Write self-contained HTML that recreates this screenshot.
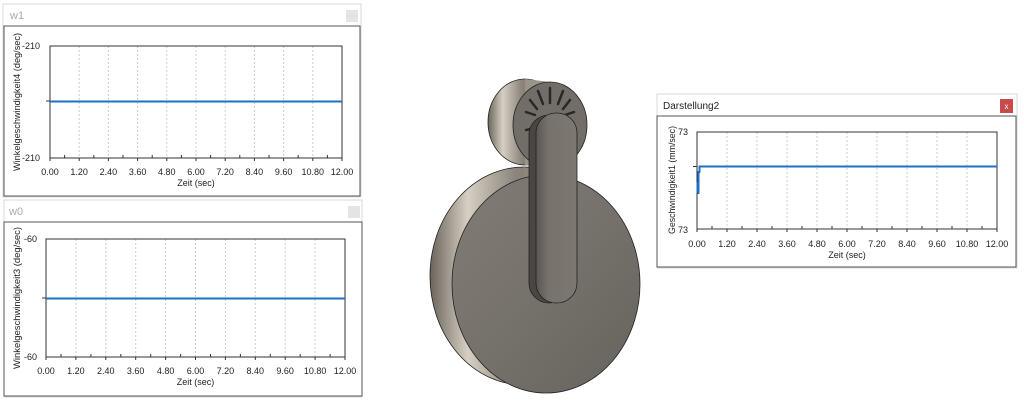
<!DOCTYPE html>
<html><head><meta charset="utf-8"><style>
html,body{margin:0;padding:0;background:#fff;width:1024px;height:410px;overflow:hidden}
svg{display:block}
text{font-family:"Liberation Sans",sans-serif;fill:#222}
</style></head><body>
<svg width="1024" height="410" viewBox="0 0 1024 410" xmlns="http://www.w3.org/2000/svg">
<defs>
<linearGradient id="rim" x1="0" y1="0" x2="1" y2="0">
<stop offset="0" stop-color="#6a645c"/><stop offset="0.2" stop-color="#d6cfc3"/><stop offset="0.45" stop-color="#8d867c"/><stop offset="1" stop-color="#55504a"/>
</linearGradient>
<linearGradient id="face" x1="0" y1="0" x2="1" y2="1">
<stop offset="0" stop-color="#817c75"/><stop offset="0.5" stop-color="#76716b"/><stop offset="1" stop-color="#66625c"/>
</linearGradient>
<linearGradient id="arm" x1="0" y1="0" x2="1" y2="0">
<stop offset="0" stop-color="#5a5650"/><stop offset="0.3" stop-color="#77726b"/><stop offset="1" stop-color="#7c7770"/>
</linearGradient>
</defs>

<!-- Window w1 -->
<rect x="3" y="4" width="358" height="193" fill="#fff" stroke="#d8d8d8"/>
<text x="10" y="19" font-size="11" style="fill:#aaa">w1</text>
<rect x="346" y="10" width="12" height="12" fill="#e4e4e4"/>
<rect x="4" y="26" width="356" height="170" fill="#fff" stroke="#555"/>
<g stroke="#ccc" stroke-dasharray="2,2">
<path d="M79.2 46V158M108.4 46V158M137.6 46V158M166.8 46V158M196 46V158M225.2 46V158M254.4 46V158M283.6 46V158M312.8 46V158"/>
</g>
<rect x="50" y="46" width="292" height="112" fill="none" stroke="#333"/>
<path d="M46 101H50M50 158V161M64.6 158V155M79.2 158V161M93.8 158V155M108.4 158V161M123 158V155M137.6 158V161M152.2 158V155M166.8 158V161M181.4 158V155M196 158V161M210.6 158V155M225.2 158V161M239.8 158V155M254.4 158V161M269 158V155M283.6 158V161M298.2 158V155M312.8 158V161M327.4 158V155M342 158V161" stroke="#333"/>
<path d="M50 101.5H342" stroke="#1f6fc9" stroke-width="2"/>
<g font-size="9" text-anchor="end"><text x="40" y="49">-210</text><text x="40" y="161">-210</text></g>
<g font-size="9" text-anchor="middle">
<text x="50" y="175">0.00</text><text x="79.2" y="175">1.20</text><text x="108.4" y="175">2.40</text><text x="137.6" y="175">3.60</text><text x="166.8" y="175">4.80</text><text x="196" y="175">6.00</text><text x="225.2" y="175">7.20</text><text x="254.4" y="175">8.40</text><text x="283.6" y="175">9.60</text><text x="312.8" y="175">10.80</text><text x="342" y="175">12.00</text>
<text x="196" y="186">Zeit (sec)</text>
<text transform="translate(20,102) rotate(-90)" font-size="9" textLength="138" lengthAdjust="spacingAndGlyphs">Winkelgeschwindigkeit4 (deg/sec)</text>
</g>

<!-- Window w0 -->
<rect x="4" y="200" width="358" height="197" fill="#fff" stroke="#d8d8d8"/>
<text x="9" y="215" font-size="11" style="fill:#aaa">w0</text>
<rect x="348" y="206" width="12" height="12" fill="#e4e4e4"/>
<rect x="4" y="222" width="358" height="174" fill="#fff" stroke="#555"/>
<g stroke="#ccc" stroke-dasharray="2,2">
<path d="M75.9 239V357M105.8 239V357M135.7 239V357M165.6 239V357M195.5 239V357M225.4 239V357M255.3 239V357M285.2 239V357M315.1 239V357"/>
</g>
<rect x="46" y="239" width="299" height="118" fill="none" stroke="#333"/>
<path d="M42 298H46M46 357V360M61 357V354M75.9 357V360M90.9 357V354M105.8 357V360M120.8 357V354M135.7 357V360M150.7 357V354M165.6 357V360M180.6 357V354M195.5 357V360M210.5 357V354M225.4 357V360M240.4 357V354M255.3 357V360M270.3 357V354M285.2 357V360M300.2 357V354M315.1 357V360M330.1 357V354M345 357V360" stroke="#333"/>
<path d="M46 298.5H345" stroke="#1f6fc9" stroke-width="2"/>
<g font-size="9" text-anchor="end"><text x="37" y="242">-60</text><text x="37" y="360">-60</text></g>
<g font-size="9" text-anchor="middle">
<text x="46" y="374">0.00</text><text x="75.9" y="374">1.20</text><text x="105.8" y="374">2.40</text><text x="135.7" y="374">3.60</text><text x="165.6" y="374">4.80</text><text x="195.5" y="374">6.00</text><text x="225.4" y="374">7.20</text><text x="255.3" y="374">8.40</text><text x="285.2" y="374">9.60</text><text x="315.1" y="374">10.80</text><text x="345" y="374">12.00</text>
<text x="195.5" y="385">Zeit (sec)</text>
<text transform="translate(20,298) rotate(-90)" font-size="9" textLength="142" lengthAdjust="spacingAndGlyphs">Winkelgeschwindigkeit3 (deg/sec)</text>
</g>

<!-- Window Darstellung2 -->
<rect x="657" y="94" width="360" height="174" fill="#fff" stroke="#d8d8d8"/>
<text x="663" y="109" font-size="10">Darstellung2</text>
<rect x="1000" y="99" width="13" height="14" fill="#c94a4a"/>
<text x="1006.5" y="109" font-size="8" text-anchor="middle" style="fill:#fff">x</text>
<rect x="657" y="116" width="359" height="151" fill="#fff" stroke="#555"/>
<g stroke="#ccc" stroke-dasharray="2,2">
<path d="M727 132V229M757 132V229M787 132V229M817 132V229M847 132V229M877 132V229M907 132V229M937 132V229M967 132V229"/>
</g>
<rect x="697" y="132" width="300" height="97" fill="none" stroke="#333"/>
<path d="M693 166.5H697M697 229V232M712 229V226M727 229V232M742 229V226M757 229V232M772 229V226M787 229V232M802 229V226M817 229V232M832 229V226M847 229V232M862 229V226M877 229V232M892 229V226M907 229V232M922 229V226M937 229V232M952 229V226M967 229V232M982 229V226M997 229V232" stroke="#333"/>
<path d="M697.5 193V182M698.5 194V172H699.5V166.5H997" stroke="#1f6fc9" stroke-width="2" fill="none"/>
<g font-size="9" text-anchor="end"><text x="688" y="135">73</text><text x="688" y="233">73</text></g>
<g font-size="9" text-anchor="middle">
<text x="697" y="247">0.00</text><text x="727" y="247">1.20</text><text x="757" y="247">2.40</text><text x="787" y="247">3.60</text><text x="817" y="247">4.80</text><text x="847" y="247">6.00</text><text x="877" y="247">7.20</text><text x="907" y="247">8.40</text><text x="937" y="247">9.60</text><text x="967" y="247">10.80</text><text x="997" y="247">12.00</text>
<text x="847" y="258">Zeit (sec)</text>
<text transform="translate(675,180) rotate(-90)" font-size="9.5" textLength="108" lengthAdjust="spacingAndGlyphs">Geschwindigkeit1 (mm/sec)</text>
</g>

<!-- 3D object -->
<!-- big disk -->
<ellipse cx="524" cy="276" rx="94" ry="109" fill="url(#rim)" stroke="#222" stroke-width="0.8"/>
<path d="M524 167 L546 175 L546 393 L524 385 Z" fill="#8d867c"/>
<ellipse cx="546" cy="284" rx="94" ry="109" fill="url(#face)" stroke="#222" stroke-width="0.8"/>
<!-- hub -->
<ellipse cx="525" cy="122" rx="37" ry="43" fill="url(#rim)" stroke="#222" stroke-width="0.8"/>
<path d="M525 79 L550 82 L550 168 L525 165 Z" fill="#9a9389"/>
<ellipse cx="550" cy="125" rx="37" ry="43" fill="#726d67" stroke="#222" stroke-width="0.8"/>
<g stroke="#2a2825" stroke-width="2.5" stroke-linecap="round">
<path d="M550 88V103M538 91L543 104M563 91L558 104M530 100L537 109M570 100L563 109M526 112L535 115M574 112L565 115M526 130L535 128M574 130L565 128M530 145L537 138M570 145L563 138M538 156L543 144M562 156L557 144"/>
</g>
<!-- arm -->
<rect x="529" y="115" width="40" height="188" rx="20" fill="#4a4641" stroke="#222" stroke-width="0.8"/>
<rect x="536" y="113" width="41" height="190" rx="20" fill="url(#arm)" stroke="#222" stroke-width="0.8"/>
</svg>
</body></html>
